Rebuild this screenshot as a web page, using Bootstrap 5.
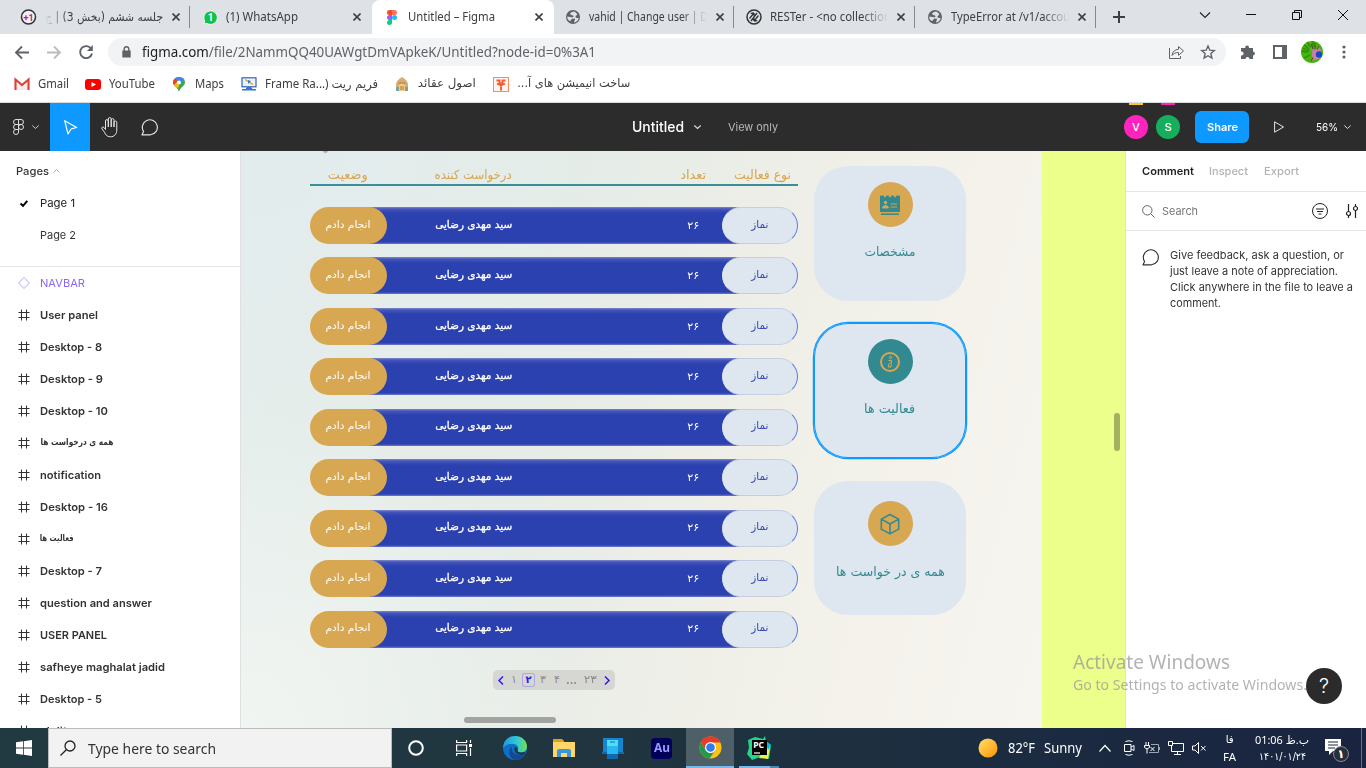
<!DOCTYPE html>
<html lang="en">
<head>
<meta charset="utf-8">
<title>Untitled – Figma</title>
<link href="https://cdn.jsdelivr.net/npm/bootstrap@5.3.0/dist/css/bootstrap.min.css" rel="stylesheet">
<style>
html,body{height:768px;overflow:hidden}
body{font-family:"Noto Sans","DejaVu Sans",sans-serif;font-size:12px;line-height:1.3;color:#3c4043;background:#fff}
svg{display:block;flex:none;overflow:visible}
[data-w]{display:inline-block;white-space:nowrap;flex:none}
.cell{display:flex;align-items:center;justify-content:center;flex:none}
/* browser */
.tabstrip{height:34px;background:#dee1e6;padding-left:9px}
.btab{width:181.2px;flex:none;height:34px;padding-left:12px;position:relative}
.btab .cell{width:16px}
.btab .ttl{width:127px;margin-left:8px;overflow:hidden;white-space:nowrap;height:18px;line-height:18px}
.btab .fade-r{-webkit-mask-image:linear-gradient(90deg,#000 92px,transparent 118px)}
.btab .fade-l{padding-right:9px;-webkit-mask-image:linear-gradient(270deg,#000 105px,transparent 127px)}
.btab.sep{border-right:1px solid #85888d;border-image:linear-gradient(#dee1e6 7px,#85888d 7px,#85888d 27px,#dee1e6 27px) 1}
.btab.on{background:#fff;border-radius:8px 8px 0 0;left:1px}
.toolbar{height:35px;padding-top:1px}
.omni{width:1118px;height:28px;border-radius:14px;background:#f1f3f4;padding-left:12px;font-size:13.5px;color:#5f6368}
.omni b{font-weight:400;color:#202124}
.marks{height:34px;border-bottom:1px solid #d9dadb;padding:0 0 3px 14px}
.fa{font-family:"DejaVu Sans",sans-serif;direction:rtl}
/* figma */
.figbar{height:48px;background:#2c2c2c;color:#fff;font-family:Inter,sans-serif;position:relative}
.figbar .cell{height:48px}
.ava{width:24px;height:24px;border-radius:50%;font-size:11px;font-weight:500}
.sharebtn{width:54px;height:32px;border-radius:6px;background:#0d99ff;font-size:11px;font-weight:600}
.work{height:577px;overflow:hidden;font-family:Inter,sans-serif;font-size:11px;color:#333}
.leftp{width:241px;border-right:1px solid #e0e0e0;background:#fff;flex:none;overflow:hidden}
.lrow{height:32px;padding-left:16px}
.lrow .cell{width:16px;margin-right:8px}
.pagesbox{height:116px;padding-top:4px;border-bottom:1px solid #e5e5e5}
.layer{font-weight:600}
.stage{width:801px;flex:none;position:relative;background:radial-gradient(ellipse 420px 260px at 0 0,#e3eced,#e3eced00),radial-gradient(ellipse 330px 320px at 0 100%,#f1f5f2,#f1f5f200),linear-gradient(105deg,#e4eeec 0,#e6ece7 38%,#efefe8 62%,#f4f2eb 80%,#f7f5f0 100%);padding-left:69px;overflow:hidden}
.tbl{width:488px;flex:none}
.thead-x{height:35px;border-bottom:2px solid #3a8f96;color:#d8a551;font-size:12.5px;padding-top:13px;margin-bottom:21px;line-height:22px}
.trow{height:37px;margin-bottom:13.45px;background:linear-gradient(#7d88cf 0,#4656b8 2px,#2c41b0 6px,#2c41b0 35px,#6c7bcb 37px) 30px 0/428px 37px no-repeat;color:#fff;font-size:10.5px}
.pill{width:76.5px;height:37px;border-radius:18.5px;padding-bottom:2px}
.pill.gold{background:#d8a752}
.pill.pale{background:#dee6f0;color:#3546ae;border:1px solid;border-color:#c5cfe0 #5b7be6 #c5cfe0 #dee6f0}
.pager{width:122px;height:20px;border-radius:5px;background:#d6d6d3;margin:22px 0 0 183px;color:#8b8b8b;font-size:11px}
#rows{height:441px}
.cardx{width:152px;height:134.5px;border-radius:34px;background:#dee6f0;color:#328a90;font-size:13px;margin-bottom:22.8px;flex:none}
.cardx.sel{box-shadow:0 0 0 1.2px #0d99ff,inset 0 0 0 1px #0d99ff}
.disc{width:45px;height:45px;border-radius:50%}
.hscroll{position:absolute;left:223px;top:566px;width:92px;height:6px;border-radius:3px;background:#a3a3a1}
.lime{width:83.5px;flex:none;background:#edff8b;position:relative}
.vscroll{position:absolute;left:72px;top:262px;width:6px;height:38px;border-radius:3px;background:#a3b161}
.rightp{flex:1;margin-left:-1px;position:relative;border-left:1px solid #e0e0e0;background:#fff}
.rtabs{height:41px;border-bottom:1px solid #e5e5e5;padding-left:16px;font-weight:600;color:#b3b3b3}
.rsearch{height:39px;border-bottom:1px solid #e5e5e5}
.watermark{position:absolute;left:1073px;top:649px;color:#999;opacity:.75}
.helpb{position:absolute;left:1306px;top:668px;width:36px;height:36px;border-radius:50%;background:#2b2b2b;color:#fff;font:300 20px Inter,sans-serif}
/* taskbar */
.taskbar{height:40px;background:linear-gradient(90deg,#213a42,#20353f 45%,#1c2c40 72%,#1a2440);color:#fff}
.tsearch{width:344px;height:40px;background:#f2f2f2;border:1px solid #bbb;color:#333;font-size:14.5px;padding-left:11px}
.tcell{width:49px;height:40px}
.tcell.act{background:#4f5f67;border-bottom:2px solid #76b9ed}
</style>
</head>
<body class="d-flex flex-column">
<svg width="0" height="0" style="position:absolute"><defs>
<symbol id="x" viewBox="0 0 8 8"><path d="M.5.5l7 7M7.5.5l-7 7" stroke="#3c4043" stroke-width="1.6"/></symbol>
<symbol id="globe" viewBox="0 0 14 14"><circle cx="7" cy="7" r="7" fill="#5f6368"/><path d="M8 1.500C5.500 2 3.500 3 4.500 4.500c1 1 2.500.5 3 1.500.3 1-1 1.300-2 1.200L1.300 6.500C1 9 2.500 10.500 4.300 11.300c.2-1.500 1.200-1.300 1.500-2.500l2.500-.3c1 .2 1 1.500.2 2l-.5 2C11 12 12.500 10 12.600 7.700 11.500 8.500 9.700 8 9.500 6.800 9.300 5.500 11 5.700 11.300 4.500 10.700 3 9.500 2 8 1.500z" fill="#dee1e6"/></symbol>
<symbol id="hash" viewBox="0 0 12 12"><path d="M3.500.5v11M8.500.5v11M.5 3.500h11M.5 8.500h11" stroke="#333" stroke-width="1"/></symbol>
<symbol id="bubble" viewBox="0 0 18 17"><path d="M1 15.800L2.600 12.500A7.500 7.500 0 1 1 9.500 15.800z" fill="none" stroke="currentColor" stroke-width="1.15" stroke-linejoin="round"/></symbol>
</defs></svg>

<header>
 <div class="tabstrip d-flex align-items-center">
  <div class="btab sep d-flex align-items-center"><div class="cell"><svg width="16" height="16"><circle cx="7.500" cy="8" r="7" fill="#f3eef2" stroke="#333" stroke-width="1.500"/><text x="2.500" y="11.500" font-size="9" font-weight="700" fill="#c2188b" font-family="Roboto">+1</text></svg></div><div class="ttl fade-l fa" style="font-size:11.500px"><span data-w="118">جلسه ششم (بخش 3) | ج</span></div><svg class="shut" width="8" height="8"><use href="#x"/></svg></div>
  <div class="btab d-flex align-items-center"><div class="cell"><svg width="15" height="15"><path d="M1 14l.8-3A6.700 6.700 0 1 1 4 13.300z" fill="#12c14b" stroke="#fff" stroke-width=".8"/><text x="4.800" y="11" font-size="10" font-weight="700" fill="#fff" font-family="Roboto">1</text></svg></div><div class="ttl"><span data-w="72">(1) WhatsApp</span></div><svg class="shut" width="8" height="8"><use href="#x"/></svg></div>
  <div class="btab on d-flex align-items-center"><div class="cell"><svg width="10" height="15"><path d="M2.500 0H5v5H2.500a2.500 2.500 0 0 1 0-5z" fill="#f24e1e"/><path d="M5 0h2.500a2.500 2.500 0 0 1 0 5H5z" fill="#ff7262"/><path d="M2.500 5H5v5H2.500a2.500 2.500 0 0 1 0-5z" fill="#a259ff"/><circle cx="7.500" cy="7.500" r="2.500" fill="#1abcfe"/><path d="M2.500 10H5v2.500A2.500 2.500 0 1 1 2.500 10z" fill="#0acf83"/></svg></div><div class="ttl"><span data-w="87">Untitled – Figma</span></div><svg class="shut" width="8" height="8"><use href="#x"/></svg></div>
  <div class="btab sep d-flex align-items-center"><div class="cell"><svg width="14" height="14"><use href="#globe"/></svg></div><div class="ttl fade-r"><span data-w="119">vahid | Change user | D</span></div><svg class="shut" width="8" height="8"><use href="#x"/></svg></div>
  <div class="btab sep d-flex align-items-center"><div class="cell"><svg width="16" height="16"><circle cx="8" cy="8" r="7" fill="none" stroke="#333" stroke-width="1.500"/><path d="M3.500 9.500L8 4M8 4l-3.300.3M8 4l.2 3M12.500 6.500L8 12M8 12l3.300-.3M8 12l-.2-3M5 12l6-8" stroke="#333" stroke-width="1.300" fill="none"/></svg></div><div class="ttl fade-r"><span data-w="121">RESTer - &lt;no collection</span></div><svg class="shut" width="8" height="8"><use href="#x"/></svg></div>
  <div class="btab sep d-flex align-items-center"><div class="cell"><svg width="14" height="14"><use href="#globe"/></svg></div><div class="ttl fade-r"><span data-w="119">TypeError at /v1/accou</span></div><svg class="shut" width="8" height="8"><use href="#x"/></svg></div>
  <div class="cell" style="width:45px"><svg width="12" height="12"><path d="M6 0v12M0 6h12" stroke="#3c4043" stroke-width="2"/></svg></div>
  <div class="d-flex ms-auto me-0 pb-1" style="width:184px;height:32px">
   <div class="cell" style="width:46px"><svg width="10" height="6"><path d="M0 .5l5 5 5-5" fill="none" stroke="#222" stroke-width="1.100"/></svg></div>
   <div class="cell" style="width:46px"><svg width="10" height="2"><path d="M0 .5h10" stroke="#111"/></svg></div>
   <div class="cell" style="width:46px"><svg width="10" height="10"><path d="M.5 2.500h7v7h-7zM2.500 2.500v-2h7v7h-2" fill="none" stroke="#111"/></svg></div>
   <div class="cell" style="width:46px"><svg width="10" height="10"><path d="M0 0l10 10M10 0L0 10" stroke="#111"/></svg></div>
  </div>
 </div>
 <div class="toolbar d-flex align-items-center">
  <div class="cell" style="width:44px"><svg width="14" height="13"><path d="M14 6.500H1M7 .5l-6 6 6 6" fill="none" stroke="#5f6368" stroke-width="1.800"/></svg></div>
  <div class="cell" style="width:20px"><svg width="14" height="13"><path d="M0 6.500h13M7 .5l6 6-6 6" fill="none" stroke="#babcbe" stroke-width="1.800"/></svg></div>
  <div class="cell" style="width:44px"><svg width="14" height="14"><path d="M12.300 4A6 6 0 1 0 13 8.500" fill="none" stroke="#5f6368" stroke-width="1.900"/><path d="M13.800 0v6H8z" fill="#5f6368"/></svg></div>
  <div class="omni d-flex align-items-center"><svg width="10" height="12" style="margin-left:3px"><path d="M-.7 4.500h8.400v7H-.7z" fill="#5f6368" /><path d="M1.200 5V3a2.300 2.300 0 0 1 4.600 0v2" fill="none" stroke="#5f6368" stroke-width="1.400"/></svg><span data-w="454" style="margin-left:9px;padding-top:1px"><b>figma.com</b>/file/2NammQQ40UAWgtDmVApkeK/Untitled?node-id=0%3A1</span>
   <svg class="ms-auto" width="15" height="14" style="margin-right:17px"><path d="M.5 3v10.500h11V11M3 10.500C3.500 6.500 6 4.500 9.500 4.300V1.500l5 4.500-5 4.300V7.500C6.500 7.500 4.500 8.500 3 10.500z" fill="none" stroke="#5f6368"/></svg>
   <svg width="14" height="14" style="margin-right:11px"><path d="M7 1l1.800 4.200 4.500.4-3.400 3 1 4.400L7 10.700 3.100 13l1-4.400-3.400-3 4.500-.4z" fill="none" stroke="#5f6368" stroke-width="1.400"/></svg></div>
  <div class="cell" style="width:44px"><svg width="16" height="16"><path d="M1 4h4.300a1.900 1.900 0 1 1 3.600 0H13v3.600a1.900 1.900 0 1 1 0 3.800V15H9.500a2 2 0 1 0-4 0H1v-3.600a2 2 0 1 0 0-3.800z" fill="#5f6368"/></svg></div>
  <div class="cell" style="width:20px"><svg width="14" height="14"><path d="M1 1h12v12H1z" fill="none" stroke="#5f6368" stroke-width="2"/><path d="M9 1h5v12H9z" fill="#5f6368"/></svg></div>
  <div class="cell" style="width:44px"><svg width="22" height="22"><circle cx="11" cy="11" r="11" fill="#45b50d"/><path d="M3 4l5 4M1 10l6 1M3 17l6-3M6 1l4 6M12 0v6M2 7l6 3" stroke="#2b8a0a" stroke-width="1.300"/><path d="M9 5l4 4 5-3 3 4-3 8-8 2 2-6z" fill="#a68c86"/><path d="M10 3l2 5M14 2v6M18 5l-3 5M10 20l3-5" stroke="#5b4038" stroke-width="1"/><circle cx="16" cy="13.500" r="5" fill="#cf7bb0"/><circle cx="18" cy="13.500" r="3.200" fill="#164ac0"/></svg></div>
  <div class="cell" style="width:20px"><svg width="4" height="14"><g fill="#5f6368"><circle cx="2" cy="2" r="1.600"/><circle cx="2" cy="7" r="1.600"/><circle cx="2" cy="12" r="1.600"/></g></svg></div>
 </div>
 <div class="marks d-flex align-items-center">
  <svg width="16" height="12"><path d="M3 5v7h10V5L8 9z" fill="#eee"/><path d="M1.500 12V1.500L8 7l6.500-5.500V12" fill="none" stroke="#dd4338" stroke-width="2.200"/></svg><span data-w="31" style="margin-left:8px">Gmail</span>
  <svg width="16" height="11" style="margin-left:16px"><rect width="16" height="11" rx="3" fill="#f00"/><path d="M6.500 3v5L11 5.500z" fill="#fff"/></svg><span data-w="46" style="margin-left:8px">YouTube</span>
  <svg width="12" height="15" style="margin-left:18px"><path d="M6 15C5 10 0 9 0 5.500A6 5.500 0 0 1 12 5.500C12 9 7 10 6 15z" fill="#34a853"/><path d="M0 5.500A6 5.500 0 0 1 6 0L2 9Q0 7 0 5.500z" fill="#ea4335"/><path d="M2 2Q4 0 6 0q4 0 5.500 3L7 5z" fill="#4285f4"/><path d="M1 8l4-4 1 6-2 1z" fill="#fbbc04"/><circle cx="6" cy="5.500" r="2" fill="#fff"/></svg><span data-w="29" style="margin-left:10px">Maps</span>
  <svg width="16" height="14" style="margin-left:17px"><rect x="1" y=".8" width="14" height="9" fill="#eaf4ff" stroke="#2e65b3" stroke-width="1.200"/><path d="M4 2.500l8 5" stroke="#d79a28" stroke-width="1.200"/><path d="M7 3l3 1-3 3z" fill="#367bd0"/><path d="M6 10h4l1.500 2H15v1.500H1V12h3.500z" fill="#3777c6"/></svg><span data-w="113" style="margin-left:8px">Frame Ra...) <span class="fa">فریم ریت</span></span>
  <svg width="12" height="15" style="margin-left:18px"><path d="M0 14V7Q1 3 6 0q5 3 6 7v7z" fill="#d9ab70"/><path d="M0 10h12v4H0z" fill="#71a6a4"/><path d="M3 14V8q3-4 6 0v6z" fill="#f4ca80"/><path d="M2.500 6h7M4 10h4M4 12h4" stroke="#a97d4d"/></svg><span data-w="58" class="fa" style="margin-left:10px">اصول عقائد</span>
  <svg width="16" height="15" style="margin-left:17px"><rect x=".5" y=".5" width="15" height="14" fill="#fff3ef" stroke="#ff875e"/><path d="M8 13.500V7M3.500 3.500h3v3h3v-3h3M4 6.500l4 2 4-2" stroke="#f85a2b" stroke-width="1.900" fill="none"/></svg><span data-w="113" class="fa" style="margin-left:8px">ساخت انیمیشن های آ...</span>
 </div>
</header>

<nav class="figbar d-flex align-items-center">
 <div class="cell" style="width:50px;padding-left:13px;justify-content:flex-start"><svg width="11" height="16"><path d="M3 .5h2.500v5H3a2.500 2.500 0 0 1 0-5zM5.500.5H8a2.500 2.500 0 0 1 0 5H5.500zM3 5.500h2.500v5H3a2.500 2.500 0 0 1 0-5zM3 10.500h2.500V13A2.500 2.500 0 1 1 3 10.500z" fill="none" stroke="#ddd"/><circle cx="8" cy="8" r="2.500" fill="none" stroke="#ddd"/></svg><svg width="7" height="4" style="margin-left:8px"><path d="M.3.500l3.200 3 3.200-3" fill="none" stroke="#ccc"/></svg></div>
 <div class="cell" style="width:40px;background:#0d99ff"><svg width="13" height="15"><path d="M.7.700l12 6.800-5.500 1.300L4 14z" fill="none" stroke="#fff" stroke-width="1.200" stroke-linejoin="round"/></svg></div>
 <div class="cell" style="width:40px"><svg width="19" height="21"><path d="M4.500 12.500V4a1.300 1.300 0 0 1 2.800 0v6V2a1.400 1.400 0 0 1 2.900 0v8V3a1.300 1.300 0 0 1 2.800 0v7V5.500a1.400 1.400 0 0 1 2.800 0V13c0 4-2.500 6.800-6.300 6.800-3.500 0-5-2-6-4.600L1 12c-.8-1.500 1-2.800 2-1.500z" fill="none" stroke="#e5e5e5"/></svg></div>
 <div class="cell" style="width:40px;color:#e5e5e5"><svg width="18" height="17"><use href="#bubble"/></svg></div>
 <span data-w="52" style="font-size:14px;font-weight:500;margin-left:462px">Untitled</span><svg width="7" height="4" style="margin-left:10px"><path d="M.3.500l3.200 3 3.200-3" fill="none" stroke="#ddd" stroke-width="1.100"/></svg>
 <span data-w="50" style="font-size:11px;color:#b8b8b8;margin-left:27px">View only</span>
 <div class="d-flex" style="margin-left:346px;gap:8px"><div class="cell position-relative ava" style="height:24px;background:#ff24bd">V<i class="position-absolute" style="top:-12px;left:5px;width:14px;height:2px;background:#ffc72c"></i></div><div class="cell position-relative ava" style="height:24px;background:#14ae5c">S<i class="position-absolute" style="top:-12px;left:5px;width:14px;height:2px;background:#ff24bd"></i></div></div>
 <div class="cell sharebtn" style="height:32px;margin-left:15px"><span data-w="31">Share</span></div>
 <svg width="10" height="12" style="margin-left:25px"><path d="M.6.800v10.400L9.500 6z" fill="none" stroke="#e5e5e5" stroke-linejoin="round"/></svg>
 <span data-w="22" style="font-size:11px;margin-left:32px">56%</span><svg width="7" height="4" style="margin-left:6px"><path d="M.3.500l3.200 3 3.200-3" fill="none" stroke="#ddd"/></svg>
</nav>

<main class="work d-flex">
 <aside class="leftp">
  <div class="pagesbox">
   <div class="lrow d-flex align-items-center"><span data-w="33" style="font-weight:500">Pages</span><svg width="7" height="4" style="margin-left:4px"><path d="M.5 3.500l3-3 3 3" fill="none" stroke="#aaa"/></svg></div>
   <div class="lrow d-flex align-items-center" style="color:#222"><div class="cell"><svg width="8" height="7"><path d="M.5 3.500L3 5.800 7.300.800" fill="none" stroke="#000" stroke-width="1.900"/></svg></div><span data-w="35">Page 1</span></div>
   <div class="lrow d-flex align-items-center"><div class="cell"></div><span data-w="36">Page 2</span></div>
  </div>
  <div id="layers"><div class="lrow d-flex align-items-center" style="color:#8c66f5"><div class="cell"><svg width="12" height="12"><path d="M6 .7L11.300 6 6 11.300.7 6z" fill="none" stroke="#d5c7fb" stroke-width="1.200"/></svg></div><span data-w="45">NAVBAR</span></div></div>
 </aside>

 <section class="stage">
  <i class="position-absolute rounded-circle" style="left:82px;top:-3px;width:5px;height:5px;background:#a8aeb5"></i>
  <div class="d-flex">
   <div class="tbl">
    <div class="thead-x d-flex"><span class="fa" data-w="40" style="margin-left:18px">وضعیت</span><span class="fa" data-w="77" style="margin-left:67px">درخواست کننده</span><span class="fa" data-w="26" style="margin-left:168px">تعداد</span><span class="fa" data-w="57" style="margin-left:28px">نوع فعالیت</span></div>
    <div id="rows"></div>
    <div class="pager d-flex align-items-center"><svg width="6" height="9" style="margin-left:5px"><path d="M5 .5l-4 4 4 4" fill="none" stroke="#2a1cf0" stroke-width="1.500"/></svg><span class="fa text-center" style="width:10px;margin-left:5px">۱</span><span class="fa text-center" style="width:11px;height:12px;line-height:12px;margin-left:4px;color:#2a1cf0;box-shadow:0 0 0 1px #aaa8dd;border-radius:2px;font-weight:700;font-size:10px">۲</span><span class="fa text-center" style="width:10px;margin-left:4px">۳</span><span class="fa text-center" style="width:10px;margin-left:4px">۴</span><span data-w="11" style="margin-left:4px;font-weight:700;font-size:12px;line-height:12px">...</span><span class="fa" data-w="13" style="margin-left:7px">۲۳</span><svg width="6" height="9" style="margin-left:7px"><path d="M1 .5l4 4-4 4" fill="none" stroke="#2a1cf0" stroke-width="1.500"/></svg></div>
   </div>
   <div class="d-flex flex-column" style="margin:15px 0 0 16px">
    <div class="cardx d-flex flex-column align-items-center"><div class="cell disc" style="background:#d8a752;margin-top:16px"><svg width="20" height="20"><path d="M0 1.500Q0 .5 1 .5h2.500q1.500 4 3 0h2q1.500 4 3 0h2q1.500 4 3 0H19q1 0 1 1V17H0z" fill="#328a90"/><circle cx="5.500" cy="7.500" r="1.700" fill="#d8a752"/><path d="M2.500 13q0-2.500 3-2.500t3 2.500zM10.500 9h6.500M10.500 12h6.500" fill="#d8a752" stroke="#d8a752" stroke-width=".9"/><path d="M1 19.200h18" stroke="#328a90" stroke-width="1.500"/></svg></div><span class="fa" data-w="51" style="margin-top:17px">مشخصات</span></div>
    <div class="cardx sel d-flex flex-column align-items-center"><div class="cell disc" style="background:#328a90;margin-top:16px"><svg width="20" height="20" fill="none" stroke="#d8a752"><circle cx="10" cy="10" r="9" stroke-width="2"/><circle cx="10.500" cy="5.500" r="1.200"/><path d="M8.500 8.500h3l-.5 6.500H8.300l.3-2.500 1.500-2"/></svg></div><span class="fa" data-w="51" style="margin-top:17px">فعالیت ها</span></div>
    <div class="cardx d-flex flex-column align-items-center"><div class="cell disc" style="background:#d8a752;margin-top:20.500px"><svg width="20" height="22" fill="none" stroke="#328a90" stroke-width="1.500" stroke-linejoin="round"><path d="M10 1.500l8.700 4.700v10L10 20.800 1.300 16.200v-10zM1.300 6.200L10 11l8.700-4.800M10 11v9.800"/></svg></div><span class="fa" data-w="109" style="margin-top:17.500px">همه ی در خواست ها</span></div>
   </div>
  </div>
  <div class="hscroll"></div>
 </section>
 <div class="lime"><div class="vscroll"></div></div>

 <aside class="rightp">
  <div class="rtabs d-flex align-items-center"><span data-w="52" style="color:#222">Comment</span><span data-w="39" style="margin-left:15px;font-weight:500">Inspect</span><span data-w="35" style="margin-left:16px;font-weight:500">Export</span></div>
  <div class="rsearch d-flex align-items-center"><svg width="13" height="13" style="margin-left:16px" fill="none" stroke="#666"><circle cx="5.300" cy="5.300" r="4.700"/><path d="M8.700 8.700l3.800 3.800"/></svg><span data-w="36" style="margin-left:7px;color:#777">Search</span><svg width="16" height="16" style="margin-left:114px" fill="none" stroke="#222"><circle cx="8" cy="8" r="7.500"/><path d="M4 6h8M5 8.500h6M6.500 11h3"/></svg><svg width="12" height="14" style="margin-left:18px" fill="none" stroke="#222" stroke-width="1.200"><path d="M2.500 0v7M2.500 12v2M9.500 0v2M9.500 7v7"/><circle cx="2.500" cy="9.500" r="2"/><circle cx="9.500" cy="4.500" r="2"/></svg></div>
  <div class="d-flex" style="padding:16px 0 0 16px"><svg width="18" height="17" style="color:#333;margin-top:2px"><use href="#bubble"/></svg><div class="d-flex flex-column align-items-start" style="margin-left:10px;line-height:16px"><span data-w="174">Give feedback, ask a question, or</span><span data-w="168">just leave a note of appreciation.</span><span data-w="183">Click anywhere in the file to leave a</span><span data-w="51">comment.</span></div></div>
 </aside>
</main>

<footer class="taskbar d-flex align-items-center">
 <div class="cell" style="width:48px"><svg width="16" height="16" fill="#fff"><path d="M0 2.300L7 1.300v6.300H0zM7.800 1.200L16 0v7.600H7.800zM0 8.400h7v6.300L0 13.700zM7.800 8.400H16V16l-8.200-1.200z"/></svg></div>
 <div class="tsearch d-flex align-items-center"><svg width="16" height="16" fill="none" stroke="#222" stroke-width="1.300"><circle cx="10" cy="6" r="5"/><path d="M6.300 9.700L.5 15.500"/></svg><span data-w="128" style="margin-left:12px">Type here to search</span></div>
 <div class="cell" style="width:48px"><svg width="16" height="16"><circle cx="8" cy="8" r="6.800" fill="none" stroke="#fff" stroke-width="2"/></svg></div>
 <div class="cell" style="width:50px;padding-right:2px"><svg width="16" height="16" fill="none" stroke="#fff" stroke-width="1.200"><path d="M.6 0v2.500h10V0M.6 5h10v6h-10zM.6 16v-2.500h10V16M14.500 0v3M14.500 8v8"/><path d="M13 4h3v3h-3z" fill="#fff" stroke="none"/></svg></div>
 <div class="cell tcell"><svg width="24" height="24"><defs><linearGradient id="e1"><stop stop-color="#2497e4"/><stop offset=".55" stop-color="#31c6d7"/><stop offset="1" stop-color="#72e052"/></linearGradient></defs><circle cx="12" cy="12" r="12" fill="#0c70c9"/><path d="M.3 10C1 4 6 0 12 0c7 0 12 5 12 10.500 0 4-3 6-6.500 6-2.500 0-3.500-1-3-2 1.500-2.500.5-6-4-6.500C6 7.500 2 8.500.3 12z" fill="url(#e1)"/><path d="M9 10c-2 5 3 11 12.500 8.500C19 22.500 16 24 12 24 6 22 4 15 9 10z" fill="#124a91"/><path d="M14.500 14.500c.5 1.800 3 2.500 6.500 1.500l2 1-1.500 1.500C16 20 10 17 11.500 11.500c2-1 4 .5 3 3z" fill="#1b3a50"/></svg></div>
 <div class="cell tcell"><svg width="22" height="18"><path d="M0 0h9l2 2v14H0z" fill="#e79e12"/><path d="M0 3h22v15H0z" fill="#ffd667"/><path d="M4 18v-6q0-2 2-2h10q2 0 2 2v6h-4v-4H8v4z" fill="#3896da"/></svg></div>
 <div class="cell tcell"><svg width="22" height="22"><path d="M1 1h20v15H1z" fill="#1685cf"/><path d="M0 15h22v2H0z" fill="#0e69ae"/><path d="M5 3h11v8H5z" fill="#50dcf7"/><path d="M5 9h11v8H5z" fill="#26b8ef"/><path d="M5 17h11v5H5z" fill="#1169b3"/><path d="M8 5h5" stroke="#087b9e"/></svg></div>
 <div class="cell tcell"><div class="cell" style="width:21px;height:21px;border-radius:4px;background:#00005b;color:#9999ff;font-weight:700;font-size:11.500px"><span data-w="16">Au</span></div></div>
 <div class="cell tcell act" style="width:48px"><svg width="23" height="23"><circle cx="11.500" cy="11.500" r="11" fill="#fbc116"/><path d="M1.700 6.500A11 11 0 0 1 21.500 6.500H11.500L7 14z" fill="#e33b2e"/><path d="M1.700 6.500A11 11 0 0 0 10.500 22.500L16 14.500 7 14z" fill="#229a4a"/><circle cx="11.500" cy="11.500" r="5.500" fill="#fff"/><circle cx="11.500" cy="11.500" r="4.300" fill="#317bea"/></svg></div>
 <div class="cell tcell position-relative"><svg width="24" height="24"><path d="M1 4l7-3 8 2 2-3 1 5 5 4-2 14-9-2-8 3-5-6 2-6z" fill="#21d789"/><path d="M12 22l9 1 2-13-4-2z" fill="#e8f34a"/><path d="M18 5l6 4-3 5z" fill="#12b9dc"/><path d="M5 4h15v15H5z" fill="#000"/><path d="M7 17h6" stroke="#fff" stroke-width="1.200"/><text x="6.300" y="11.500" font-size="8.500" font-weight="700" fill="#fff" font-family="Noto Sans">PC</text></svg><i class="position-absolute bottom-0" style="left:5px;width:40px;height:2px;background:linear-gradient(90deg,#76b9ed 31px,#4c86b1 31px)"></i></div>
 <svg width="20" height="20" style="margin-left:195px"><defs><linearGradient id="sun" x2="1" y2="1"><stop stop-color="#ffe06c"/><stop offset="1" stop-color="#ff9500"/></linearGradient></defs><circle cx="10" cy="10" r="9.500" fill="url(#sun)"/></svg>
 <span data-w="27" style="margin-left:10px;font-size:13.500px;padding-top:1px">82°F</span><span data-w="38" style="margin-left:9px;font-size:13.500px;padding-top:1px">Sunny</span>
 <div class="cell" style="width:45px"><svg width="12" height="7"><path d="M.5 6.500l5.500-6 5.500 6" fill="none" stroke="#fff" stroke-width="1.200"/></svg></div>
 <svg width="12" height="16" style="margin-left:-4px" fill="none" stroke="#fff"><path d="M1.500 4.500h6.500v7H1.500zM8 7l3-1.500v5L8 9M2.500 1.500Q6 0 9.500 1.500M2.500 14.500q3.500 1.500 7 0"/></svg>
 <svg width="16" height="13" style="margin-left:9px" fill="none" stroke="#fff"><path d="M2 0v3M4.500 0v3M.5 3.500h5v2q-2.500 3-5 0zM3 7v4.500M6.500 5l4 4M10.500 5l-4 4" /><path d="M7 2.500h7.500v8H5M15.500 5v3" stroke="#9aa4b4"/></svg>
 <svg width="16" height="14" style="margin-left:8px" fill="none" stroke="#fff"><path d="M5 2.500h10.500v8H3.500V5M9.500 10.500v3M6 13.500h7M.5.500h4v4h-4z"/></svg>
 <svg width="15" height="12" style="margin-left:8px" fill="none" stroke="#fff"><path d="M.5 4h2.500L6.500.500v11L3 8H.5zM9 4l4.500 4.500M13.500 4L9 8.500"/></svg>
 <div class="d-flex flex-column align-items-center" style="width:45px;line-height:17px;font-size:11px"><span class="fa" data-w="8">فا</span><span data-w="13">FA</span></div>
 <div class="d-flex flex-column align-items-center" style="width:58px;line-height:17px;font-size:11.500px;margin-left:1px"><span data-w="54" class="fa" style="font-family:'Noto Sans','DejaVu Sans',sans-serif">ب.ظ <bdi>01:06</bdi></span><span data-w="47" style="font-family:'DejaVu Sans',sans-serif;direction:ltr;unicode-bidi:bidi-override;font-size:10.500px">۱۴۰۱/۰۱/۲۴</span></div>
 <svg width="26" height="26" style="margin-left:14px;margin-top:4px"><path d="M0 2h16v12H8l-4 4v-4H0z" fill="#fff"/><path d="M3 5h10M3 8h10M3 11h7" stroke="#1b2940"/><circle cx="16" cy="17" r="7.500" fill="#292e37" stroke="#858d99"/><text x="16" y="21" text-anchor="middle" font-family="DejaVu Sans" font-size="12" font-weight="700" fill="#fff">۱</text></svg>
 <i class="ms-auto" style="width:1px;height:40px;margin-right:4px;background:#667183"></i>
</footer>

<div class="helpb cell"><span>?</span></div>
<div class="watermark d-flex flex-column align-items-start"><span data-w="157" style="font-size:19.500px;line-height:26px">Activate Windows</span><span data-w="234" style="font-size:14px;line-height:20px">Go to Settings to activate Windows.</span></div>

<script src="https://cdn.jsdelivr.net/npm/bootstrap@5.3.0/dist/js/bootstrap.bundle.min.js"></script>
<script>
const layers=[['User panel',58],['Desktop - 8',62],['Desktop - 9',63],['Desktop - 10',68],['همه ی درخواست ها',73],['notification',61],['Desktop - 16',68],['فعالیت ها',34],['Desktop - 7',62],['question and answer',112],['USER PANEL',67],['safheye maghalat jadid',125],['Desktop - 5',62],['ab lit',27]];
document.getElementById('layers').insertAdjacentHTML('beforeend',layers.map(([t,w])=>{
  const rtl=/[\u0600-\u06ff]/.test(t);
  return `<div class="lrow layer d-flex align-items-center"><div class="cell"><svg width="12" height="12"><use href="#hash"/></svg></div><span data-w="${w}" class="${rtl?'fa':''}" ${rtl?'style="font-size:9px"':''}>${t}</span></div>`;
}).join(''));
document.getElementById('rows').innerHTML=Array(9).fill(`<div class="trow d-flex align-items-center"><div class="cell pill gold"><span class="fa" data-w="45">انجام دادم</span></div><span class="fa" data-w="77" style="margin-left:48.500px;padding-bottom:2px;-webkit-text-stroke:.3px #fff">سید مهدی رضایی</span><span class="fa" data-w="12" style="margin-left:175px">۲۶</span><div class="cell pill pale ms-auto"><span class="fa" data-w="17">نماز</span></div></div>`).join('');
document.querySelectorAll('[data-w]').forEach(el=>{
  const w=+el.dataset.w,n=el.getBoundingClientRect().width,rtl=getComputedStyle(el).direction==='rtl';
  el.style.transformOrigin=rtl?'right':'left';
  el.style.transform=`scaleX(${w/n})`;
  el.style[rtl?'marginLeft':'marginRight']=(w-n+(rtl?parseFloat(getComputedStyle(el).marginLeft):0))+'px';
});
</script>
</body>
</html>
